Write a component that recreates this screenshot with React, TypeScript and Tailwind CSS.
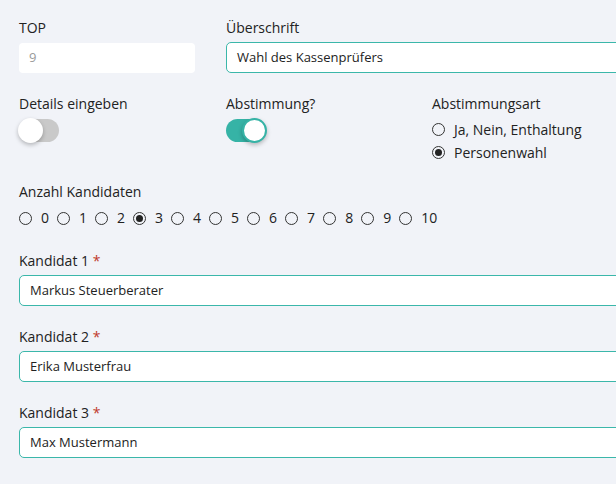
import React from 'react';

function Radio({ checked, label }: { checked?: boolean; label: string }) {
  return (
    <label className="flex items-center gap-[9px]">
      <span className="flex h-[13px] w-[13px] items-center justify-center rounded-full border border-[#333]">
        {checked && <span className="h-[7px] w-[7px] rounded-full bg-[#222]" />}
      </span>
      <span>{label}</span>
    </label>
  );
}

function Toggle({ on }: { on?: boolean }) {
  return (
    <div
      className={
        on
          ? 'relative h-[23px] w-[40px] rounded-full bg-[#36b3a6]'
          : 'relative h-[23px] w-[40px] rounded-full bg-[#c9c9c9]'
      }
    >
      <span
        className={
          on
            ? 'absolute right-[-1px] top-[-1px] h-[25px] w-[25px] rounded-full border-2 border-[#36b3a6] bg-white shadow-[0_2px_4px_rgba(0,0,0,0.25)]'
            : 'absolute left-[-1px] top-[-1px] h-[25px] w-[25px] rounded-full bg-white shadow-[0_2px_4px_rgba(0,0,0,0.25)]'
        }
      />
    </div>
  );
}

function Field({ label, value }: { label: string; value: string }) {
  return (
    <div className="mb-[21px]">
      <div className="mb-[4px] leading-[20px]">
        {label} <span className="text-[#c0392b]">*</span>
      </div>
      <div className="flex h-[31px] items-center rounded-[5px] border border-[#3bb7aa] bg-white px-[10px] text-[13px]">
        {value}
      </div>
    </div>
  );
}

export default function App() {
  const counts = ['0', '1', '2', '3', '4', '5', '6', '7', '8', '9', '10'];
  return (
    <div className="h-[484px] w-[616px] overflow-hidden bg-[#f1f3f8] font-['Open_Sans',sans-serif] text-[14px] text-[#222]">
      <div className="w-[700px] pl-[19px] pt-[18px]">
        <div className="flex gap-[31px]">
          <div className="w-[176px]">
            <div className="mb-[5px] leading-[20px]">TOP</div>
            <div className="flex h-[30px] items-center rounded-[4px] bg-white px-[10px] text-[13px] text-[#9a9a9a]">9</div>
          </div>
          <div className="flex-1">
            <div className="mb-[4px] leading-[20px]">Überschrift</div>
            <div className="flex h-[31px] items-center rounded-[5px] border border-[#3bb7aa] bg-white px-[10px] text-[13px]">
              Wahl des Kassenprüfers
            </div>
          </div>
        </div>

        <div className="mt-[21px] flex">
          <div className="w-[207px]">
            <div className="mb-[5px] leading-[20px]">Details eingeben</div>
            <Toggle />
          </div>
          <div className="w-[206px]">
            <div className="mb-[5px] leading-[20px]">Abstimmung?</div>
            <Toggle on />
          </div>
          <div>
            <div className="mb-[4px] leading-[20px]">Abstimmungsart</div>
            <div className="leading-[23px]">
              <Radio label="Ja, Nein, Enthaltung" />
              <Radio checked label="Personenwahl" />
            </div>
          </div>
        </div>

        <div className="mt-[18px]">
          <div className="mb-[4px] leading-[20px]">Anzahl Kandidaten</div>
          <div className="flex gap-[8px] leading-[24px]">
            {counts.map((c) => (
              <Radio key={c} checked={c === '3'} label={c} />
            ))}
          </div>
        </div>

        <div className="mt-[21px]">
          <Field label="Kandidat 1" value="Markus Steuerberater" />
          <Field label="Kandidat 2" value="Erika Musterfrau" />
          <Field label="Kandidat 3" value="Max Mustermann" />
        </div>
      </div>
    </div>
  );
}
